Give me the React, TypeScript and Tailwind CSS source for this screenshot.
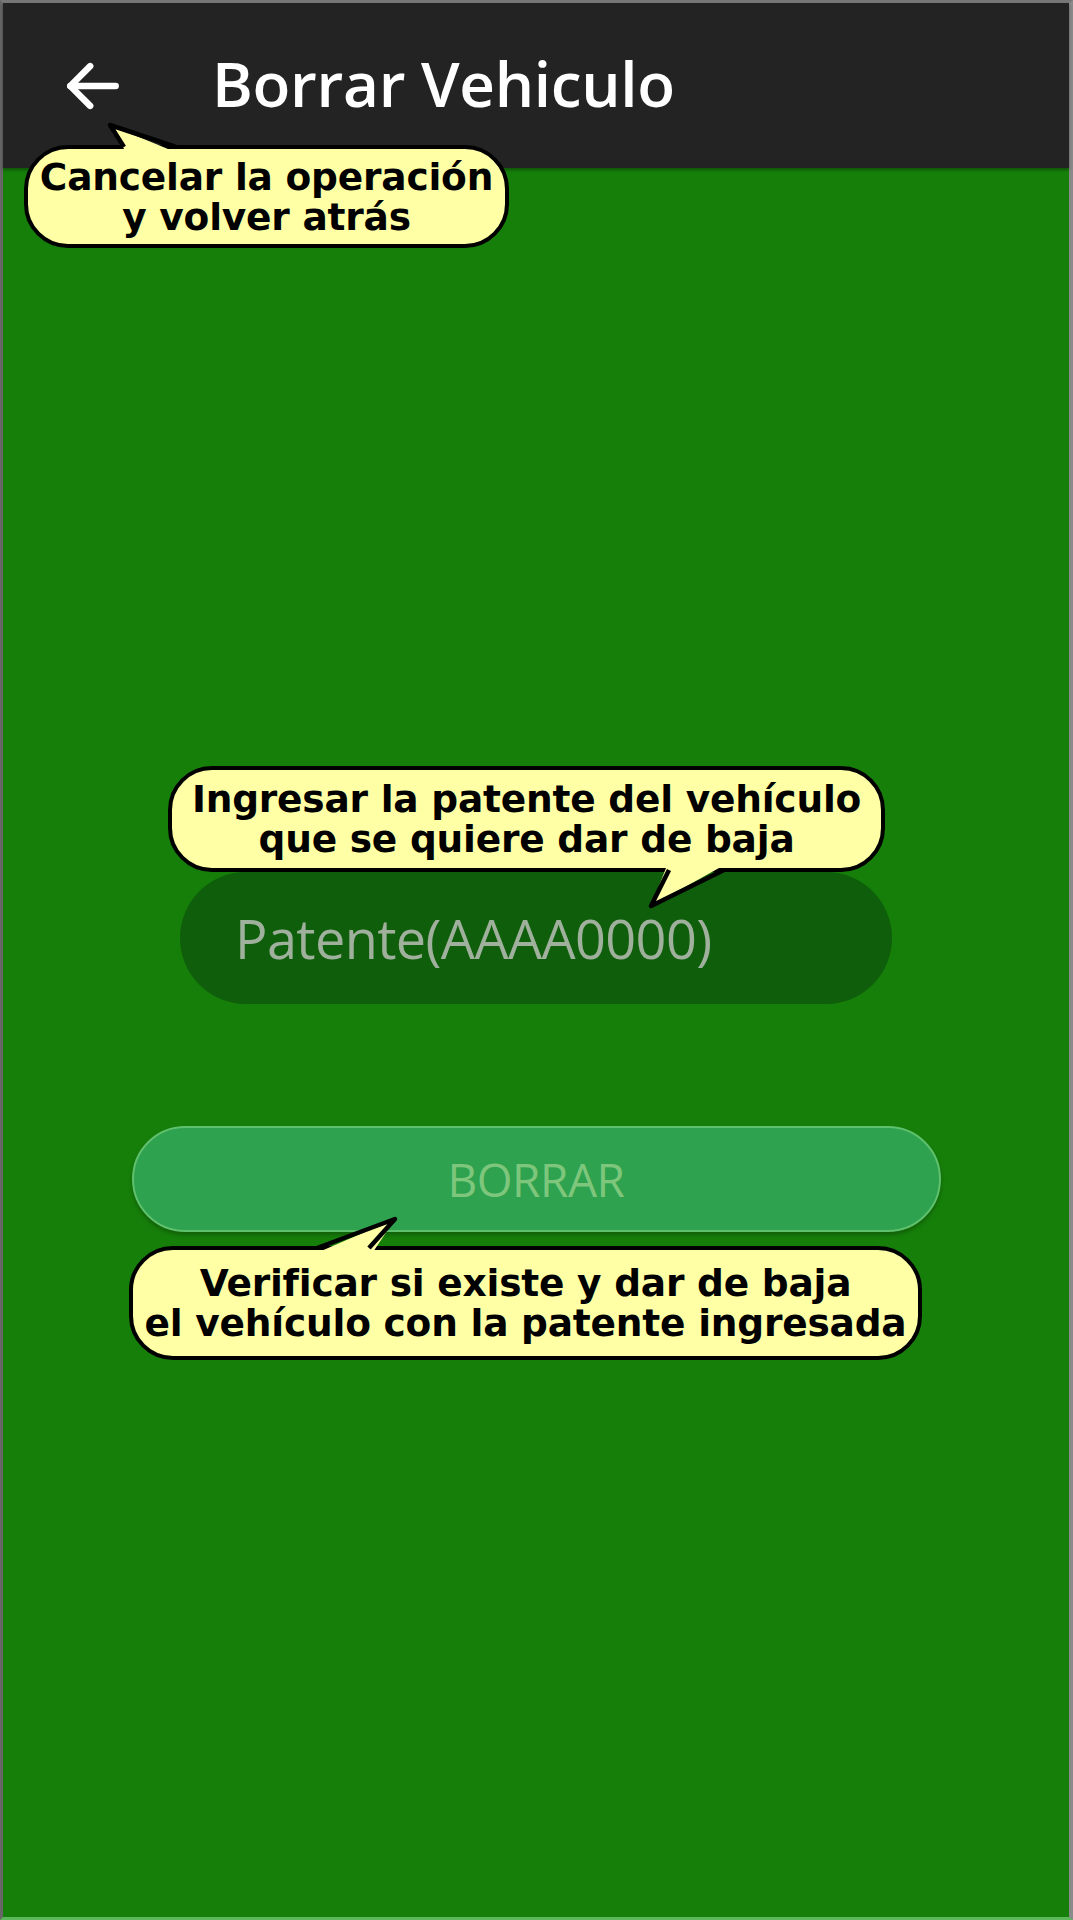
import React from "react";

type Pt = [number, number];

const Bubble = ({
  className,
  lines,
  fill,
  stroke,
}: {
  className: string;
  lines: string[];
  fill: Pt[];
  stroke: Pt[];
}) => {
  return (
    <div className={"absolute " + className}>
      <div className="w-full h-full rounded-[44px] bg-[#ffffa6] border-4 border-black flex flex-col items-center justify-center font-['DejaVu_Sans',sans-serif] font-bold text-black text-[37.5px] leading-[40px] tracking-[-0.2px]">
        {lines.map((l) => (
          <span key={l} className="whitespace-nowrap">
            {l}
          </span>
        ))}
      </div>
      <svg className="absolute left-0 top-0 overflow-visible" width="1" height="1">
        <polygon points={fill.map((p) => p.join(",")).join(" ")} fill="#ffffa6" />
        <polyline
          points={stroke.map((p) => p.join(",")).join(" ")}
          fill="none"
          stroke="#000"
          strokeWidth="4.5"
          strokeLinejoin="round"
        />
      </svg>
    </div>
  );
};

export default function App() {
  return (
    <div className="relative w-full h-[1920px] bg-[#167f0a] flex flex-col font-['Open_Sans',sans-serif] border-t-[3px] border-t-[#777] border-l-[3px] border-l-[#666] border-r-[4px] border-r-[#8a8a8a] border-b-[3px] border-b-[#5cb85a]">
      <header className="h-[165px] bg-[#232323] flex items-center shrink-0 shadow-[0_2px_3px_rgba(0,0,0,0.35)]">
        <div className="w-[180px] flex justify-center">
          <svg width="68" height="68" viewBox="0 0 24 24" fill="none" stroke="#fff" strokeWidth="2.3" strokeLinecap="round" strokeLinejoin="round">
            <path d="M20 12H4" />
            <path d="M11 5l-7 7 7 7" />
          </svg>
        </div>
        <h1 className="ml-[29px] text-white text-[62px] font-semibold tracking-[-0.3px] leading-none pb-[6px]">
          Borrar Vehiculo
        </h1>
      </header>

      <main className="flex-1 flex flex-col items-center">
        <div className="mt-[704px] w-[712px] h-[132px] rounded-full bg-[#0f5e0b] flex items-center pl-[55px]">
          <span className="text-[54px] text-[#9fb09c] tracking-[-0.6px]">Patente(AAAA0000)</span>
        </div>
        <button className="mt-[122px] w-[809px] h-[106px] rounded-full bg-[#2ea24f] border-2 border-[#5fc06d] shadow-[0_3px_4px_rgba(0,0,0,0.25)] flex items-center justify-center">
          <span className="text-[46px] text-[#7ec67c] font-medium tracking-[-0.5px]">BORRAR</span>
        </button>
      </main>

      <Bubble
        className="left-[21px] top-[142px] w-[485px] h-[103px]"
        lines={["Cancelar la operación", "y volver atrás"]}
        fill={[[103, 9], [86, -20], [156, 9]]}
        stroke={[[100, 2], [86, -20], [152, 2]]}
      />
      <Bubble
        className="left-[165px] top-[763px] w-[717px] h-[106px]"
        lines={["Ingresar la patente del vehículo", "que se quiere dar de baja"]}
        fill={[[500, 97], [483, 140], [560, 97]]}
        stroke={[[501, 104], [483, 140], [556, 104]]}
      />
      <Bubble
        className="left-[126px] top-[1243px] w-[793px] h-[114px]"
        lines={["Verificar si existe y dar de baja", "el vehículo con la patente ingresada"]}
        fill={[[183, 9], [266, -27], [242, 9]]}
        stroke={[[188, 2], [266, -27], [240, 2]]}
      />
    </div>
  );
}
